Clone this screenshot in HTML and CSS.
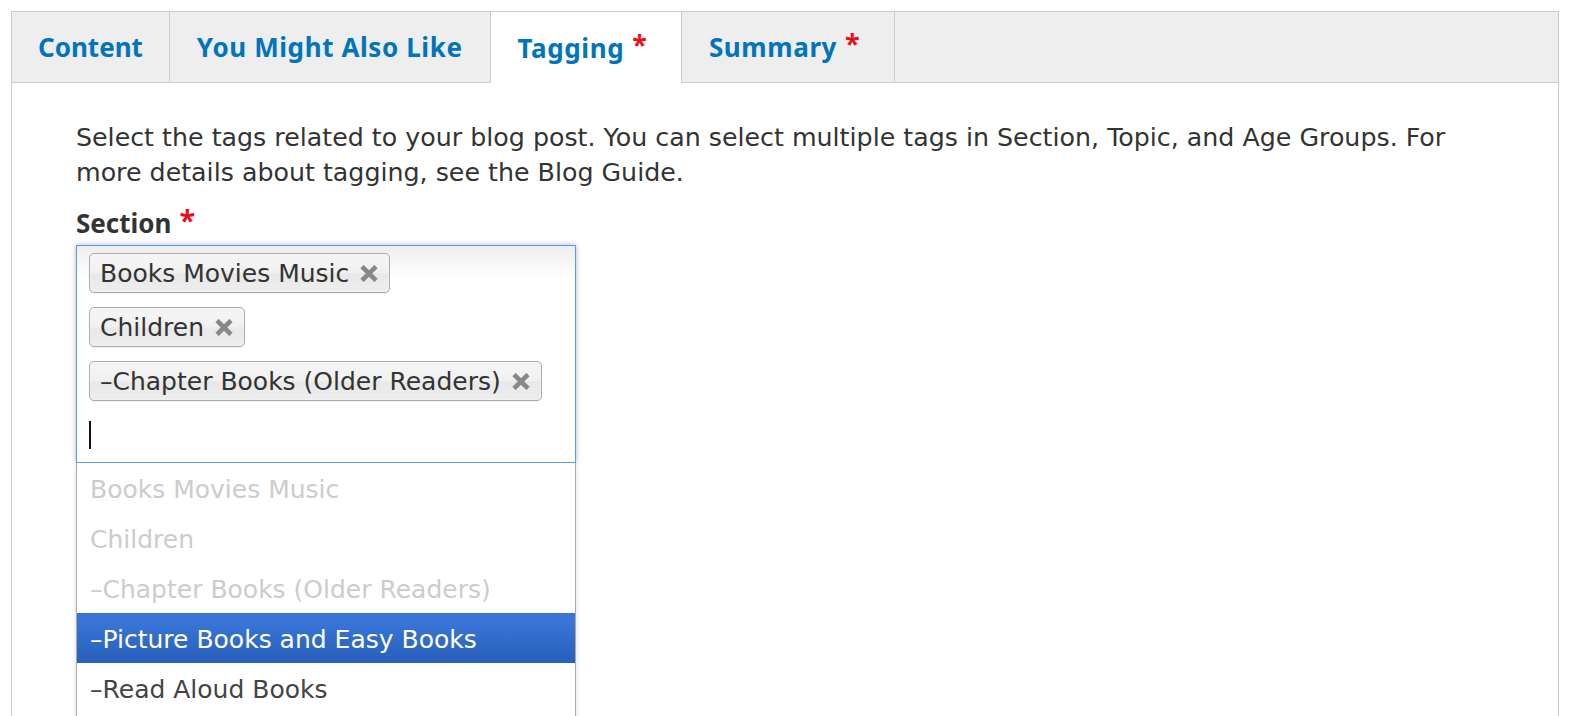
FILE: index.html
```html
<!DOCTYPE html>
<html lang="en">
<head>
<meta charset="utf-8">
<title>Tagging</title>
<link rel="stylesheet" href="styles.css">
</head>
<body>
<div class="page">
  <ul class="tabs">
    <li class="tab"><span class="tab-link">Content</span></li>
    <li class="tab"><span class="tab-link">You Might Also Like</span></li>
    <li class="tab active"><span class="tab-link">Tagging<span class="req">*</span></span></li>
    <li class="tab"><span class="tab-link">Summary<span class="req">*</span></span></li>
  </ul>
  <div class="panel">
    <p class="desc">Select the tags related to your blog post. You can select multiple tags in Section, Topic, and Age Groups. For more details about tagging, see the Blog Guide.</p>
    <div class="field">
      <label class="label">Section<span class="req">*</span></label>
      <div class="chosen">
        <ul class="choices">
          <li class="choice"><span>Books Movies Music</span><svg class="close" width="20" height="17" viewBox="0 0 20 17"><path d="M3 1.5 L17 15.5 M17 1.5 L3 15.5" stroke="#888" stroke-width="4.6" fill="none"/></svg></li>
          <li class="choice"><span>Children</span><svg class="close" width="20" height="17" viewBox="0 0 20 17"><path d="M3 1.5 L17 15.5 M17 1.5 L3 15.5" stroke="#888" stroke-width="4.6" fill="none"/></svg></li>
          <li class="choice"><span>–Chapter Books (Older Readers)</span><svg class="close" width="20" height="17" viewBox="0 0 20 17"><path d="M3 1.5 L17 15.5 M17 1.5 L3 15.5" stroke="#888" stroke-width="4.6" fill="none"/></svg></li>
          <li class="search"><span class="caret"></span></li>
        </ul>
        <ul class="results">
          <li class="result disabled">Books Movies Music</li>
          <li class="result disabled">Children</li>
          <li class="result disabled">–Chapter Books (Older Readers)</li>
          <li class="result highlighted">–Picture Books and Easy Books</li>
          <li class="result">–Read Aloud Books</li>
        </ul>
      </div>
    </div>
  </div>
</div>
</body>
</html>
```

FILE: styles.css
```css
* { box-sizing: border-box; }
html, body { margin: 0; padding: 0; background: #fff; }
body {
  font-family: "DejaVu Sans", "Noto Sans", sans-serif;
  color: #333;
  overflow: hidden;
}
.page { margin: 11px 17px 0 11px; }

.tabs {
  display: flex;
  list-style: none;
  margin: 0;
  padding: 0;
  background: #eee;
  border: 1px solid #ccc;
  box-sizing: content-box;
  height: 70px;
}
.tab {
  display: flex;
  align-items: center;
  padding: 0 27px;
  border-right: 1px solid #ccc;
  font-family: "Noto Sans", "DejaVu Sans", sans-serif;
  font-size: 26px;
  letter-spacing: 0.6px;
  font-weight: 700;
  color: #0074bd;
}
.tab:first-child { letter-spacing: 0; padding: 0 26px; }
.tab.active {
  background: #fff;
  margin-bottom: -1px;
}
.tab-link { display: inline-flex; align-items: flex-start; }
.req {
  color: #e8111a;
  font-family: "Noto Sans", "DejaVu Sans", sans-serif;
  font-weight: 700;
  letter-spacing: 0;
  margin: 0 7px 0 8px;
  font-size: 27px;
  line-height: 1;
  position: relative;
  top: 1px;
}

.panel {
  border: 1px solid #ccc;
  border-top: 0;
  background: #fff;
  padding: 37px 64px;
  min-height: 700px;
}
.desc {
  margin: 0;
  font-size: 25.3px;
  line-height: 35px;
}
.label {
  display: flex;
  align-items: flex-start;
  margin-top: 16px;
  font-family: "Noto Sans", "DejaVu Sans", sans-serif;
  font-size: 26px;
  line-height: 35px;
  font-weight: 700;
}
.label .req { top: -1px; margin-left: 8px; font-size: 29px; }

.chosen {
  position: relative;
  width: 500px;
  margin-top: 4px;
}
.choices {
  display: flex;
  flex-direction: column;
  align-items: flex-start;
  list-style: none;
  margin: 0;
  padding: 0 10px 0 12px;
  height: 218px;
  border: 1px solid #5897fb;
  background: linear-gradient(#eee 1%, #fff 15%);
  box-shadow: 0 0 5px rgba(0, 0, 0, 0.3);
}
.choice {
  display: flex;
  align-items: center;
  gap: 10px;
  height: 40px;
  margin: 7px 0;
  padding: 0 10px;
  border: 1px solid #aaa;
  border-radius: 5px;
  background: linear-gradient(#f4f4f4 20%, #f0f0f0 50%, #e8e8e8 52%, #eee 100%);
  box-shadow: inset 0 0 2px #fff, 0 1px 0 rgba(0, 0, 0, 0.05);
  font-size: 25px;
  color: #333;
  white-space: nowrap;
}
.close { display: block; flex: none; }
.search {
  height: 53px;
  display: flex;
  align-items: center;
}
.caret {
  display: block;
  width: 2px;
  height: 28px;
  background: #111;
}

.results {
  position: absolute;
  top: 100%;
  left: 0;
  width: 500px;
  list-style: none;
  margin: 0;
  padding: 0 0 40px;
  background: #fff;
  border: 1px solid #aaa;
  border-top: 0;
  box-shadow: 0 4px 5px rgba(0, 0, 0, 0.15);
}
.result {
  height: 50px;
  padding: 4px 13px 0;
  line-height: 46px;
  font-size: 25px;
  color: #444;
  white-space: nowrap;
}
.result.disabled { color: #ccc; }
.result.highlighted {
  background: linear-gradient(#3875d7 20%, #2a62bc 90%);
  color: #fff;
}
```
